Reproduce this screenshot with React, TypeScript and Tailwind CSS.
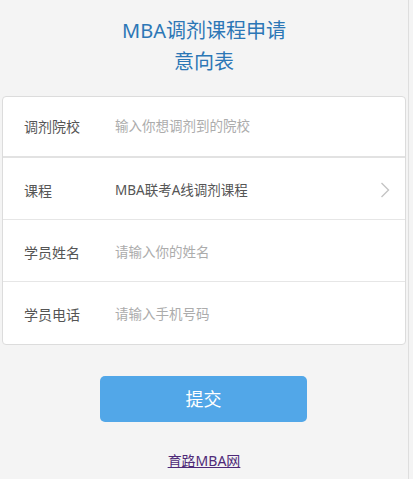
export default function App() {
  const rows = [
    { label: "调剂院校", value: "输入你想调剂到的院校", placeholder: true },
    { label: "课程", value: "MBA联考A线调剂课程", placeholder: false, arrow: true },
    { label: "学员姓名", value: "请输入你的姓名", placeholder: true },
    { label: "学员电话", value: "请输入手机号码", placeholder: true },
  ];

  return (
    <div
      className="min-h-screen w-full bg-[#f4f4f4]"
      style={{ fontFamily: '"Noto Sans", "Noto Sans CJK SC", sans-serif' }}
    >
      <div className="min-h-screen w-[409px] border-r border-[#dedede] pt-[15px]">
        {/* Title */}
        <h1 className="text-center text-[20px] leading-[31px] font-normal text-[#2c77b6]">
          MBA调剂课程申请
          <br />
          意向表
        </h1>

        {/* Form card */}
        <div className="mx-[2px] mt-[19px] rounded-[4px] border border-[#dcdcdc] bg-white">
          {rows.map((row, i) => (
            <div
              key={row.label}
              className={
                i === 0
                  ? "flex h-[61px] items-center border-b-2 border-[#e2e2e2] pl-[21px] pr-[14px]"
                  : i === rows.length - 1
                    ? "flex h-[62px] items-center pl-[21px] pr-[14px] pt-[2px]"
                    : "flex h-[62px] items-center border-b border-[#e6e6e6] pl-[21px] pr-[14px] pt-[3px]"
              }
            >
              <span className="w-[91px] text-[14px] text-[#555]">{row.label}</span>
              <span
                className={
                  row.placeholder
                    ? "flex-1 text-[13.5px] text-[#acacac]"
                    : "flex-1 text-[13.5px] text-[#555]"
                }
              >
                {row.value}
              </span>
              {row.arrow && (
                <svg width="10" height="16" viewBox="0 0 10 16" className="mr-[1px]">
                  <polyline
                    points="1.5,1 8.5,8 1.5,15"
                    fill="none"
                    stroke="#c4c4c4"
                    strokeWidth="1.4"
                  />
                </svg>
              )}
            </div>
          ))}
        </div>

        {/* Submit */}
        <div className="mt-[31px] flex justify-center">
          <button className="ml-[-1px] h-[46px] w-[207px] rounded-[5px] bg-[#52a7e8] text-[18px] text-white">
            提交
          </button>
        </div>

        {/* Footer link */}
        <div className="mt-[26px] text-center">
          <a href="#" className="text-[14px] leading-[20px] text-[#4f2a78] underline">
            育路MBA网
          </a>
        </div>
      </div>
    </div>
  );
}
